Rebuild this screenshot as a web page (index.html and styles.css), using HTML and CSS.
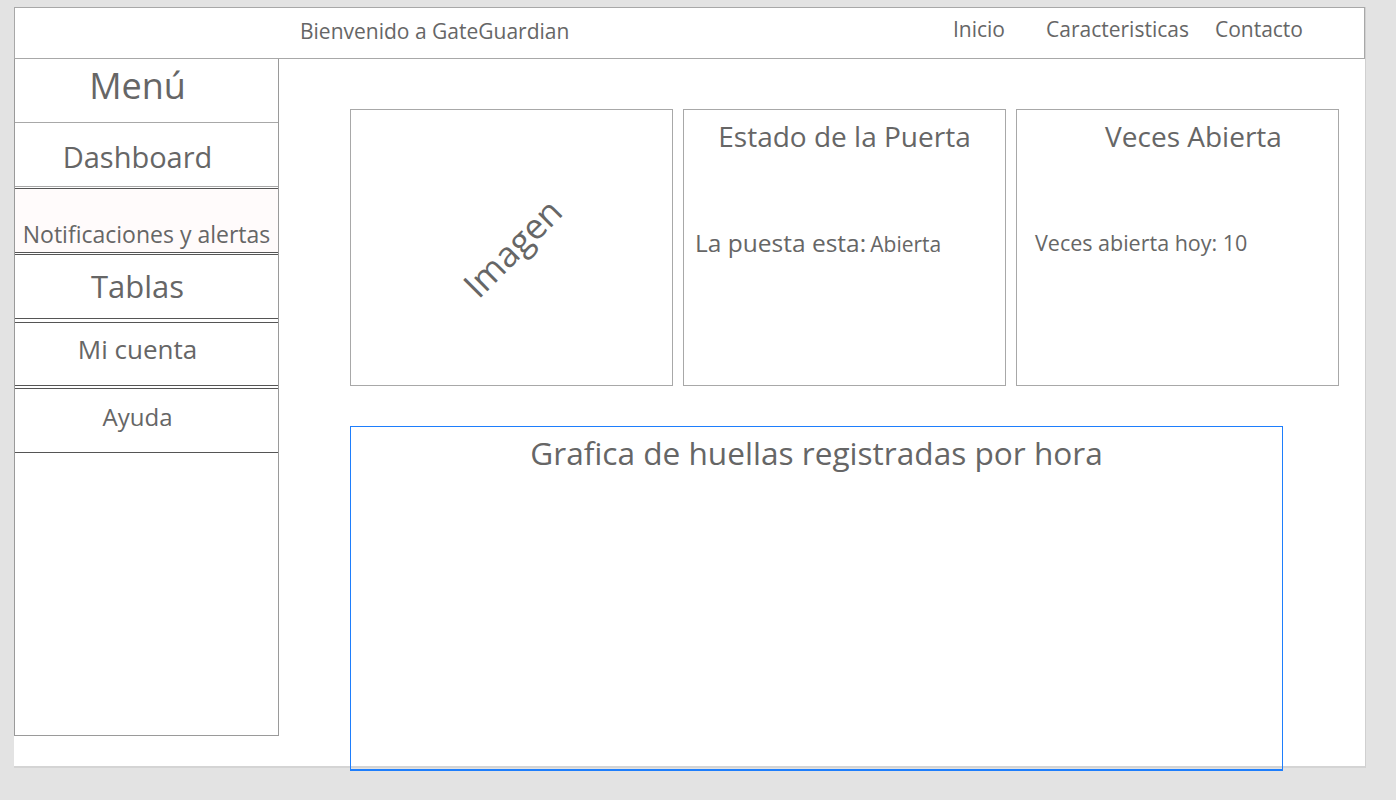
FILE: index.html
```html
<!DOCTYPE html>
<html lang="es">
<head>
<meta charset="utf-8">
<title>GateGuardian</title>
<link rel="stylesheet" href="styles.css">
</head>
<body>
<div class="canvas">
  <header class="topbar">
    <div class="welcome">Bienvenido a GateGuardian</div>
    <nav class="nav">
      <a class="nav-item nav-inicio">Inicio</a>
      <a class="nav-item nav-carac">Caracteristicas</a>
      <a class="nav-item nav-contacto">Contacto</a>
    </nav>
  </header>
  <div class="body-row">
    <aside class="sidebar">
      <div class="side-item side-menu">Menú</div>
      <div class="side-item side-dash">Dashboard</div>
      <div class="side-item side-notif">Notificaciones y alertas</div>
      <div class="side-item side-tablas">Tablas</div>
      <div class="side-item side-cuenta">Mi cuenta</div>
      <div class="side-item side-ayuda">Ayuda</div>
    </aside>
    <main class="main">
      <div class="cards">
        <div class="card card-img"><span class="img-label">Imagen</span></div>
        <div class="card card-estado">
          <div class="card-title">Estado de la Puerta</div>
          <div class="card-body"><span class="lbl">La puesta esta:</span> <span class="val">Abierta</span></div>
        </div>
        <div class="card card-veces">
          <div class="card-title">Veces Abierta</div>
          <div class="card-body">Veces abierta hoy: 10</div>
        </div>
      </div>
      <section class="chart">
        <div class="chart-title">Grafica de huellas registradas por hora</div>
      </section>
    </main>
  </div>
</div>
</body>
</html>
```
FILE: styles.css
```css
* { box-sizing: border-box; }
html, body { margin: 0; padding: 0; }
body {
  background: #e3e3e3;
  font-family: "Open Sans", "Noto Sans", sans-serif;
  color: #666;
  width: 1396px;
  height: 800px;
  overflow: hidden;
}
.canvas {
  margin: 7px 0 0 14px;
  width: 1352px;
  height: 761px;
  background: #fff;
  border-right: 1px solid #d0d0d0;
  border-bottom: 2px solid #d4d4d4;
}
.topbar {
  height: 52px;
  border: 1px solid #a8a8a8;
  display: flex;
  align-items: center;
  padding-bottom: 8px;
}
.welcome {
  margin-left: 285px;
  font-size: 21px;
  margin-top: 4px;
}
.nav { margin-left: auto; display: flex; font-size: 21px; }
.nav-item { color: #666; }
.nav-inicio { margin-right: 41px; }
.nav-carac { margin-right: 26px; }
.nav-contacto { margin-right: 61px; }

.body-row { display: flex; }
.sidebar {
  width: 265px;
  height: 677px;
  border: 1px solid #9a9a9a;
  border-top: none;
  display: flex;
  flex-direction: column;
}
.side-item {
  display: flex;
  align-items: center;
  justify-content: center;
  color: #666;
  padding-right: 18px;
}
.side-menu { height: 64px; font-size: 36px; border-bottom: 1px solid #a8a8a8; padding-bottom: 10px; }
.side-dash { height: 64px; font-size: 29px; border-bottom: 1px solid #a8a8a8; padding-top: 4px; }
.side-notif {
  height: 65px; margin-top: 1px; font-size: 23px;
  background: #fffbfb;
  border-top: 1px solid #555; border-bottom: 1px solid #555;
  align-items: flex-end; padding: 0 0 2px 0;
  white-space: nowrap;
}
.side-tablas { height: 65px; margin-top: 1px; font-size: 31px; border-top: 1px solid #555; border-bottom: 1px solid #555; padding-bottom: 2px; }
.side-cuenta { height: 64px; margin-top: 3px; font-size: 26px; border-top: 1px solid #555; border-bottom: 1px solid #555; padding-bottom: 10px; }
.side-ayuda { height: 65px; margin-top: 2px; font-size: 24px; border-top: 1px solid #555; border-bottom: 1px solid #555; padding-bottom: 8px; }

.main { padding: 50px 0 0 71px; }
.cards { display: flex; gap: 10px; }
.card {
  width: 323px;
  height: 277px;
  border: 1px solid #a8a8a8;
}
.card-img {
  display: flex;
  align-items: center;
  justify-content: center;
}
.img-label {
  font-size: 35px;
  transform: rotate(-45deg);
  display: inline-block;
}
.card-title {
  font-size: 28px;
  line-height: 38px;
  text-align: center;
  margin-top: 7px;
}
.card-veces .card-title { padding-left: 32px; }
.card-body {
  margin-top: 71px;
  line-height: 33px;
  white-space: nowrap;
}
.card-estado .card-body { padding-left: 11px; }
.card-estado .lbl { font-size: 24.5px; }
.card-estado .val { font-size: 21px; }
.card-veces .card-body { padding-left: 18px; font-size: 21.5px; }

.chart {
  margin-top: 40px;
  width: 933px;
  height: 345px;
  border: 1px solid #1e7efc;
  border-bottom-width: 2px;
}
.chart-title {
  text-align: center;
  font-size: 31.6px;
  line-height: 44px;
  margin-top: 4px;
}
```
